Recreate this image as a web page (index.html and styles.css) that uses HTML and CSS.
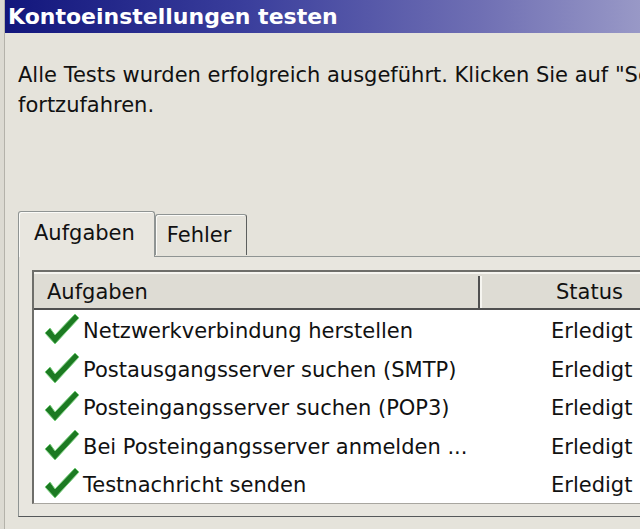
FILE: index.html
```html
<!DOCTYPE html>
<html lang="de">
<head>
    <meta charset="UTF-8">
    <title>Kontoeinstellungen testen</title>
    <link rel="stylesheet" href="styles.css">
</head>
<body>
    <div class="window">
        <div class="frame">
            <div class="titlebar">Kontoeinstellungen testen</div>
            <div class="content">
                <p class="intro">Alle Tests wurden erfolgreich ausgeführt. Klicken Sie auf "Schließen", um<br>fortzufahren.</p>

                <div class="tabs">
                    <div class="tab-strip">
                        <div class="tab active">Aufgaben</div>
                        <div class="tab">Fehler</div>
                    </div>
                    <div class="tab-panel">
                        <div class="list">
                            <div class="list-head">
                                <div class="col-task">Aufgaben</div>
                                <div class="col-status">Status</div>
                            </div>
                            <div class="row">
                                <div class="col-task"><svg class="check" viewBox="0 0 36 32"><path d="M1 20 L6 15 L11 22 L31 1 L35 5 L11 31 Z"/></svg>Netzwerkverbindung herstellen</div>
                                <div class="col-status">Erledigt</div>
                            </div>
                            <div class="row">
                                <div class="col-task"><svg class="check" viewBox="0 0 36 32"><path d="M1 20 L6 15 L11 22 L31 1 L35 5 L11 31 Z"/></svg>Postausgangsserver suchen (SMTP)</div>
                                <div class="col-status">Erledigt</div>
                            </div>
                            <div class="row">
                                <div class="col-task"><svg class="check" viewBox="0 0 36 32"><path d="M1 20 L6 15 L11 22 L31 1 L35 5 L11 31 Z"/></svg>Posteingangsserver suchen (POP3)</div>
                                <div class="col-status">Erledigt</div>
                            </div>
                            <div class="row">
                                <div class="col-task"><svg class="check" viewBox="0 0 36 32"><path d="M1 20 L6 15 L11 22 L31 1 L35 5 L11 31 Z"/></svg>Bei Posteingangsserver anmelden ...</div>
                                <div class="col-status">Erledigt</div>
                            </div>
                            <div class="row">
                                <div class="col-task"><svg class="check" viewBox="0 0 36 32"><path d="M1 20 L6 15 L11 22 L31 1 L35 5 L11 31 Z"/></svg>Testnachricht senden</div>
                                <div class="col-status">Erledigt</div>
                            </div>
                        </div>
                    </div>
                </div>
            </div>
        </div>
    </div>
</body>
</html>
```

FILE: styles.css
```css
html, body {
    margin: 0;
    padding: 0;
    height: 100%;
    overflow: hidden;
    background-color: #dcdad2;
}
body {
    font-family: "DejaVu Sans", sans-serif;
    font-size: 21px;
    color: #111;
}
.window {
    width: 800px;
    height: 100%;
    border-left: 4px solid #dcdad2;
}
.frame {
    height: 100%;
    border-left: 1px solid #b4b2aa;
    background-color: #e5e3db;
}
.titlebar {
    height: 33px;
    line-height: 33px;
    padding-left: 3px;
    color: #fff;
    font-weight: bold;
    font-size: 22px;
    white-space: nowrap;
    background: linear-gradient(to right, #12167c 0%, #3a3e9c 30%, #7070b4 60%, #a4a4cc 85%);
}
.content {
    padding: 27px 0 0 13px;
}
.intro {
    margin: 0;
    line-height: 30px;
    white-space: nowrap;
}
.tabs {
    margin-top: 92px;
}
.tab-strip {
    display: flex;
    align-items: flex-end;
    height: 44px;
    position: relative;
    z-index: 1;
}
.tab {
    height: 40px;
    line-height: 40px;
    padding: 0 15px 0 11px;
    border: 1px solid #8f9493;
    border-bottom: none;
    border-right-color: #5c5f5e;
    border-radius: 3px 3px 0 0;
    background-color: #e5e3db;
    box-shadow: inset 1px 1px 0 #fbfbf8;
    margin-bottom: 1px;
}
.tab.active {
    height: 45px;
    line-height: 42px;
    padding: 0 19px 0 15px;
    margin-bottom: -1px;
    border-right-color: #8f9493;
    background-color: #e8e6df;
}
.tab-panel {
    height: 246px;
    border: 1px solid #8f9493;
    border-bottom-color: #55585a;
    background-color: #e8e6df;
    padding: 13px 0 0 13px;
}
.list {
    border-top: 2px solid #6e6e6a;
    border-left: 2px solid #6e6e6a;
    border-bottom: 1px solid #a8a6a0;
    background-color: #fff;
}
.list-head {
    display: flex;
    height: 38px;
    line-height: 32px;
    box-sizing: border-box;
    padding-top: 4px;
    background-color: #dedcd4;
    border-bottom: 2px solid #505050;
    box-shadow: inset 0 2px 0 #f6f5f0;
}
.list-head .col-task {
    padding-left: 13px;
    border-right: 2px solid #505050;
    box-shadow: 2px 0 0 #f6f5f0;
}
.list-head .col-status {
    padding-left: 76px;
}
.col-task {
    width: 446px;
    box-sizing: border-box;
    flex: none;
    display: flex;
    align-items: center;
    white-space: nowrap;
    overflow: hidden;
}
.col-status {
    flex: 1;
    white-space: nowrap;
}
.row {
    display: flex;
    height: 38.5px;
    line-height: 34.5px;
    box-sizing: border-box;
    padding-top: 4px;
}
.row .col-status {
    padding-left: 71px;
}
.check {
    width: 36px;
    height: 32px;
    flex: none;
    margin: -4px 3px 0 10px;
    fill: #1c7a22;
    stroke: #7bd07f;
    stroke-width: 1;
}
```
